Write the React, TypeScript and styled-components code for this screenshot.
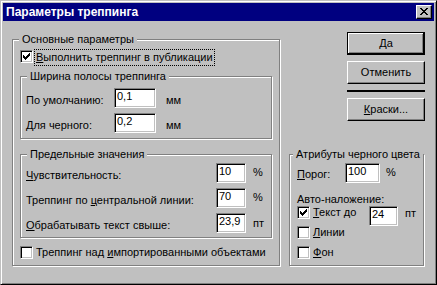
import React from "react";
import styled, { createGlobalStyle } from "styled-components";

const Global = createGlobalStyle`
  html, body { margin: 0; padding: 0; background: #c0c0c0; }
  body { font-family: "Liberation Sans", Arial, sans-serif; font-size: 11px; color: #000; }
  * { box-sizing: border-box; }
`;

const Window = styled.div`
  width: 437px;
  height: 285px;
  border: 1px solid;
  border-color: #c0c0c0 #000 #000 #c0c0c0;
  box-shadow: inset 1px 1px #fff, inset -1px -1px #808080;
  padding: 2px;
  background: #c0c0c0;
  display: flex;
  flex-direction: column;
`;

const TitleBar = styled.div`
  height: 18px;
  flex: none;
  background: #000080;
  display: flex;
  align-items: center;
  justify-content: space-between;
  padding: 0 2px 0 3px;
`;

const Title = styled.span`
  color: #fff;
  font-weight: bold;
  font-size: 12px;
  line-height: 18px;
  white-space: nowrap;
`;

const CloseButton = styled.div`
  width: 16px;
  height: 14px;
  background: #c0c0c0;
  border: 1px solid;
  border-color: #fff #000 #000 #fff;
  box-shadow: inset -1px -1px #808080;
  padding: 2px 0 0 3px;
`;

const PixelSvg = styled.svg`
  display: block;
`;

const Body = styled.div`
  display: flex;
  align-items: flex-start;
  padding-left: 9px;
`;

const Group = styled.div<{ $w?: number }>`
  position: relative;
  ${(p) => (p.$w ? `width: ${p.$w}px;` : "")}
  border: 1px solid #808080;
  box-shadow: inset 1px 1px #fff, 1px 1px #fff;
  display: flex;
  flex-direction: column;
  align-items: flex-start;
`;

const OuterGroup = styled(Group)`
  margin-top: 18px;
  padding: 0 7px 6px 7px;
`;

const InnerGroup = styled(Group)<{ $mt: number; $pt: number; $pb: number }>`
  margin-top: ${(p) => p.$mt}px;
  padding: ${(p) => p.$pt}px 0 ${(p) => p.$pb}px 5px;
  align-self: stretch;
`;

const SideGroup = styled(Group)`
  margin-top: 33px;
  padding: 8px 0 6px 7px;
`;

const GroupLabel = styled.span<{ $left: number }>`
  position: absolute;
  top: -7px;
  left: ${(p) => p.$left}px;
  padding: 0 3px;
  background: #c0c0c0;
  line-height: 13px;
  white-space: nowrap;
`;

const CheckRow = styled.div<{ $mt?: number }>`
  display: flex;
  align-items: flex-start;
  margin-top: ${(p) => p.$mt ?? 0}px;
`;

const CheckBoxBox = styled.span<{ $mt?: number }>`
  flex: none;
  display: block;
  width: 13px;
  height: 13px;
  background: #fff;
  border: 1px solid;
  border-color: #808080 #fff #fff #808080;
  box-shadow: inset 1px 1px #000, inset -1px -1px #c0c0c0;
  padding: 2px;
  margin-top: ${(p) => p.$mt ?? 0}px;
`;

const CheckText = styled.span<{ $focus?: boolean; $w?: number }>`
  line-height: 13px;
  white-space: nowrap;
  ${(p) =>
    p.$focus
      ? `margin-left: 1px; padding: 1px; border: 1px dotted #000;`
      : `margin-left: 3px;`}
  ${(p) => (p.$w ? `width: ${p.$w}px;` : "")}
`;

const FieldRow = styled.div<{ $mt?: number }>`
  display: flex;
  align-items: flex-start;
  height: 20px;
  margin-top: ${(p) => p.$mt ?? 0}px;
`;

const FieldLabel = styled.span<{ $w: number; $top: number }>`
  width: ${(p) => p.$w}px;
  padding-top: ${(p) => p.$top}px;
  line-height: 13px;
  white-space: nowrap;
`;

const Field = styled.div<{ $w: number }>`
  width: ${(p) => p.$w}px;
  height: 20px;
  flex: none;
  background: #fff;
  border: 1px solid;
  border-color: #808080 #fff #fff #808080;
  box-shadow: inset 1px 1px #000, inset -1px -1px #c0c0c0;
  padding: 1px 0 0 2px;
  line-height: 13px;
  white-space: nowrap;
`;

const Unit = styled.span<{ $ml: number; $top: number }>`
  margin-left: ${(p) => p.$ml}px;
  padding-top: ${(p) => p.$top}px;
  line-height: 13px;
`;

const PlainLine = styled.div<{ $mt: number }>`
  margin-top: ${(p) => p.$mt}px;
  line-height: 13px;
  white-space: nowrap;
`;

const Key = styled.span`
  text-decoration: underline;
  text-underline-offset: 1px;
`;

const RightCol = styled.div`
  margin-left: 9px;
  margin-top: 11px;
  width: 136px;
  display: flex;
  flex-direction: column;
  align-items: flex-start;
`;

const DialogButton = styled.div<{ $default?: boolean; $mt?: number }>`
  width: 78px;
  height: 23px;
  margin-left: 58px;
  margin-top: ${(p) => p.$mt ?? 0}px;
  display: flex;
  align-items: center;
  justify-content: center;
  line-height: 13px;
  background: #c0c0c0;
  border: 1px solid;
  ${(p) =>
    p.$default
      ? `border-color: #000; box-shadow: inset -1px -1px #000, inset 1px 1px #fff, inset -2px -2px #808080;`
      : `border-color: #fff #000 #000 #fff; box-shadow: inset -1px -1px #808080;`}
`;

const Separator = styled.div`
  width: 78px;
  height: 2px;
  margin: 6px 0 6px 58px;
  background: #000;
`;

const CHECK = ["......#", ".....##", "#...###", "##.###.", "#####..", ".###...", "..#...."];
const CLOSE = ["##....##", ".##..##.", "..####..", "...##...", "..####..", ".##..##.", "##....##"];

function Pixels({ rows }: { rows: string[] }) {
  const w = rows[0].length;
  const h = rows.length;
  return (
    <PixelSvg width={w} height={h} viewBox={`0 0 ${w} ${h}`} shapeRendering="crispEdges">
      {rows.flatMap((r, y) =>
        r.split("").map((c, x) => (c === "#" ? <rect key={`${x}-${y}`} x={x} y={y} width={1} height={1} fill="#000" /> : null))
      )}
    </PixelSvg>
  );
}

function CheckBox({ checked, mt }: { checked?: boolean; mt?: number }) {
  return <CheckBoxBox $mt={mt}>{checked ? <Pixels rows={CHECK} /> : null}</CheckBoxBox>;
}

export default function App() {
  return (
    <>
      <Global />
      <Window>
        <TitleBar>
          <Title>Параметры треппинга</Title>
          <CloseButton>
            <Pixels rows={CLOSE} />
          </CloseButton>
        </TitleBar>
        <Body>
          <OuterGroup $w={268}>
            <GroupLabel $left={6}>Основные параметры</GroupLabel>
            <CheckRow $mt={9}>
              <CheckBox checked mt={1} />
              <CheckText $focus>
                <Key>В</Key>ыполнить треппинг в публикации
              </CheckText>
            </CheckRow>

            <InnerGroup $mt={10} $pt={11} $pb={5}>
              <GroupLabel $left={6}>Ширина полосы треппинга</GroupLabel>
              <FieldRow>
                <FieldLabel $w={88} $top={6}>По умолчанию:</FieldLabel>
                <Field $w={42}>0,1</Field>
                <Unit $ml={10} $top={6}>мм</Unit>
              </FieldRow>
              <FieldRow $mt={5}>
                <FieldLabel $w={88} $top={6}>
                  <Key>Д</Key>ля черного:
                </FieldLabel>
                <Field $w={42}>0,2</Field>
                <Unit $ml={10} $top={6}>мм</Unit>
              </FieldRow>
            </InnerGroup>

            <InnerGroup $mt={15} $pt={8} $pb={4}>
              <GroupLabel $left={6}>Предельные значения</GroupLabel>
              <FieldRow>
                <FieldLabel $w={190} $top={6}>
                  <Key>Ч</Key>увствительность:
                </FieldLabel>
                <Field $w={30}>10</Field>
                <Unit $ml={7} $top={3}>%</Unit>
              </FieldRow>
              <FieldRow $mt={5}>
                <FieldLabel $w={190} $top={6}>
                  Треппинг по <Key>ц</Key>ентральной линии:
                </FieldLabel>
                <Field $w={30}>70</Field>
                <Unit $ml={7} $top={3}>%</Unit>
              </FieldRow>
              <FieldRow $mt={5}>
                <FieldLabel $w={190} $top={6}>
                  <Key>О</Key>брабатывать текст свыше:
                </FieldLabel>
                <Field $w={30}>23,9</Field>
                <Unit $ml={7} $top={4}>пт</Unit>
              </FieldRow>
            </InnerGroup>

            <CheckRow $mt={8}>
              <CheckBox />
              <CheckText>
                Треппинг над <Key>и</Key>мпортированными объектами
              </CheckText>
            </CheckRow>
          </OuterGroup>

          <RightCol>
            <DialogButton $default>Да</DialogButton>
            <DialogButton $mt={6}>Отменить</DialogButton>
            <Separator />
            <DialogButton>
              <span>
                <Key>К</Key>раски...
              </span>
            </DialogButton>

            <SideGroup $w={135}>
              <GroupLabel $left={3}>Атрибуты черного цвета</GroupLabel>
              <FieldRow>
                <FieldLabel $w={48} $top={5}>
                  <Key>П</Key>орог:
                </FieldLabel>
                <Field $w={35}>100</Field>
                <Unit $ml={6} $top={3}>%</Unit>
              </FieldRow>
              <PlainLine $mt={10}>Авто-наложение:</PlainLine>
              <FieldRow>
                <CheckBox checked />
                <CheckText $w={56}>
                  <Key>Т</Key>екст до
                </CheckText>
                <Field $w={29}>24</Field>
                <Unit $ml={7} $top={1}>пт</Unit>
              </FieldRow>
              <CheckRow>
                <CheckBox />
                <CheckText>
                  <Key>Л</Key>инии
                </CheckText>
              </CheckRow>
              <CheckRow $mt={7}>
                <CheckBox />
                <CheckText>
                  <Key>Ф</Key>он
                </CheckText>
              </CheckRow>
            </SideGroup>
          </RightCol>
        </Body>
      </Window>
    </>
  );
}
